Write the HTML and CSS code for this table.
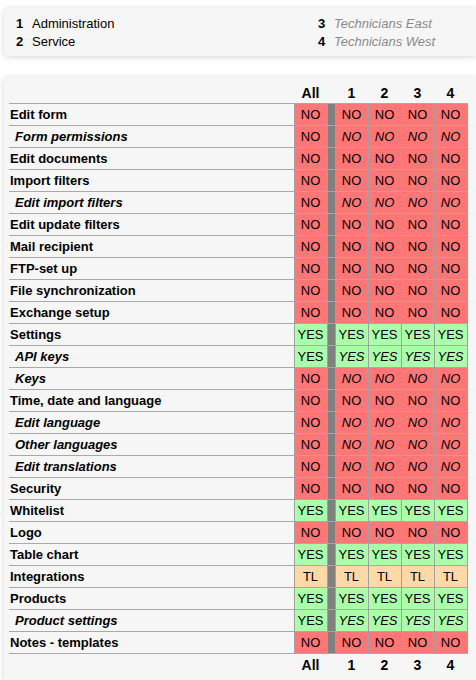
FILE: index.html
```html
<!DOCTYPE html>
<html>
<head>
<meta charset="utf-8">
<link rel="stylesheet" href="styles.css">
</head>
<body>
<div class="card legend">
  <div class="legend-col">
    <div class="legend-item"><span class="num">1</span><span class="name">Administration</span></div>
    <div class="legend-item"><span class="num">2</span><span class="name">Service</span></div>
  </div>
  <div class="legend-col legend-col-last">
    <div class="legend-item"><span class="num">3</span><span class="name muted">Technicians East</span></div>
    <div class="legend-item"><span class="num">4</span><span class="name muted">Technicians West</span></div>
  </div>
</div>

<div class="card matrix">
<table class="perm">
  <colgroup>
    <col class="c-label"><col class="c-val"><col class="c-sep"><col class="c-val"><col class="c-val"><col class="c-val"><col class="c-val">
  </colgroup>
  <thead>
    <tr><th class="lbl"></th><th>All</th><th class="sep"></th><th>1</th><th>2</th><th>3</th><th>4</th></tr>
  </thead>
  <tbody>
    <tr><td class="lbl">Edit form</td><td class="v no">NO</td><td class="sep"></td><td class="v no">NO</td><td class="v no">NO</td><td class="v no">NO</td><td class="v no">NO</td></tr>
    <tr class="sub"><td class="lbl">Form permissions</td><td class="v no">NO</td><td class="sep"></td><td class="v no">NO</td><td class="v no">NO</td><td class="v no">NO</td><td class="v no">NO</td></tr>
    <tr><td class="lbl">Edit documents</td><td class="v no">NO</td><td class="sep"></td><td class="v no">NO</td><td class="v no">NO</td><td class="v no">NO</td><td class="v no">NO</td></tr>
    <tr><td class="lbl">Import filters</td><td class="v no">NO</td><td class="sep"></td><td class="v no">NO</td><td class="v no">NO</td><td class="v no">NO</td><td class="v no">NO</td></tr>
    <tr class="sub"><td class="lbl">Edit import filters</td><td class="v no">NO</td><td class="sep"></td><td class="v no">NO</td><td class="v no">NO</td><td class="v no">NO</td><td class="v no">NO</td></tr>
    <tr><td class="lbl">Edit update filters</td><td class="v no">NO</td><td class="sep"></td><td class="v no">NO</td><td class="v no">NO</td><td class="v no">NO</td><td class="v no">NO</td></tr>
    <tr><td class="lbl">Mail recipient</td><td class="v no">NO</td><td class="sep"></td><td class="v no">NO</td><td class="v no">NO</td><td class="v no">NO</td><td class="v no">NO</td></tr>
    <tr><td class="lbl">FTP-set up</td><td class="v no">NO</td><td class="sep"></td><td class="v no">NO</td><td class="v no">NO</td><td class="v no">NO</td><td class="v no">NO</td></tr>
    <tr><td class="lbl">File synchronization</td><td class="v no">NO</td><td class="sep"></td><td class="v no">NO</td><td class="v no">NO</td><td class="v no">NO</td><td class="v no">NO</td></tr>
    <tr><td class="lbl">Exchange setup</td><td class="v no">NO</td><td class="sep"></td><td class="v no">NO</td><td class="v no">NO</td><td class="v no">NO</td><td class="v no">NO</td></tr>
    <tr><td class="lbl">Settings</td><td class="v yes">YES</td><td class="sep"></td><td class="v yes">YES</td><td class="v yes">YES</td><td class="v yes">YES</td><td class="v yes">YES</td></tr>
    <tr class="sub"><td class="lbl">API keys</td><td class="v yes">YES</td><td class="sep"></td><td class="v yes">YES</td><td class="v yes">YES</td><td class="v yes">YES</td><td class="v yes">YES</td></tr>
    <tr class="sub"><td class="lbl">Keys</td><td class="v no">NO</td><td class="sep"></td><td class="v no">NO</td><td class="v no">NO</td><td class="v no">NO</td><td class="v no">NO</td></tr>
    <tr><td class="lbl">Time, date and language</td><td class="v no">NO</td><td class="sep"></td><td class="v no">NO</td><td class="v no">NO</td><td class="v no">NO</td><td class="v no">NO</td></tr>
    <tr class="sub"><td class="lbl">Edit language</td><td class="v no">NO</td><td class="sep"></td><td class="v no">NO</td><td class="v no">NO</td><td class="v no">NO</td><td class="v no">NO</td></tr>
    <tr class="sub"><td class="lbl">Other languages</td><td class="v no">NO</td><td class="sep"></td><td class="v no">NO</td><td class="v no">NO</td><td class="v no">NO</td><td class="v no">NO</td></tr>
    <tr class="sub"><td class="lbl">Edit translations</td><td class="v no">NO</td><td class="sep"></td><td class="v no">NO</td><td class="v no">NO</td><td class="v no">NO</td><td class="v no">NO</td></tr>
    <tr><td class="lbl">Security</td><td class="v no">NO</td><td class="sep"></td><td class="v no">NO</td><td class="v no">NO</td><td class="v no">NO</td><td class="v no">NO</td></tr>
    <tr><td class="lbl">Whitelist</td><td class="v yes">YES</td><td class="sep"></td><td class="v yes">YES</td><td class="v yes">YES</td><td class="v yes">YES</td><td class="v yes">YES</td></tr>
    <tr><td class="lbl">Logo</td><td class="v no">NO</td><td class="sep"></td><td class="v no">NO</td><td class="v no">NO</td><td class="v no">NO</td><td class="v no">NO</td></tr>
    <tr><td class="lbl">Table chart</td><td class="v yes">YES</td><td class="sep"></td><td class="v yes">YES</td><td class="v yes">YES</td><td class="v yes">YES</td><td class="v yes">YES</td></tr>
    <tr><td class="lbl">Integrations</td><td class="v tl">TL</td><td class="sep"></td><td class="v tl">TL</td><td class="v tl">TL</td><td class="v tl">TL</td><td class="v tl">TL</td></tr>
    <tr><td class="lbl">Products</td><td class="v yes">YES</td><td class="sep"></td><td class="v yes">YES</td><td class="v yes">YES</td><td class="v yes">YES</td><td class="v yes">YES</td></tr>
    <tr class="sub"><td class="lbl">Product settings</td><td class="v yes">YES</td><td class="sep"></td><td class="v yes">YES</td><td class="v yes">YES</td><td class="v yes">YES</td><td class="v yes">YES</td></tr>
    <tr><td class="lbl">Notes - templates</td><td class="v no">NO</td><td class="sep"></td><td class="v no">NO</td><td class="v no">NO</td><td class="v no">NO</td><td class="v no">NO</td></tr>
  </tbody>
  <tfoot>
    <tr><th class="lbl"></th><th>All</th><th class="sep"></th><th>1</th><th>2</th><th>3</th><th>4</th></tr>
  </tfoot>
</table>
</div>
</body>
</html>
```
FILE: styles.css
```css
html, body {
  margin: 0;
  padding: 0;
  background: #ffffff;
  overflow: hidden;
}
body {
  font-family: "Liberation Sans", Arial, sans-serif;
  font-size: 13px;
  color: #000;
  padding-top: 8px;
}
.card {
  background: #f6f6f6;
  margin-left: 4px;
  border-radius: 4px 0 0 4px;
  box-shadow: 0 1px 6px rgba(0, 0, 0, 0.16);
}
.legend {
  display: flex;
  padding: 7px 0 5px 12px;
  line-height: 18px;
}
.legend-col {
  width: 302px;
  flex-shrink: 0;
}
.legend-col-last {
  width: auto;
  flex: 1;
  min-width: 0;
}
.legend-item {
  display: flex;
}
.num {
  font-weight: bold;
  width: 16px;
}
.muted {
  color: #8a8a8a;
  font-style: italic;
}
.matrix {
  margin-top: 21px;
  padding: 5px 0 8px 5px;
}
.perm {
  border-collapse: collapse;
  table-layout: fixed;
  width: 458px;
}
.c-label { width: 285px; }
.c-val { width: 33px; }
.c-sep { width: 8px; }
.perm th {
  font-weight: bold;
  font-size: 14px;
  height: 21px;
  padding: 0;
  text-align: center;
}
.perm thead tr,
.perm tbody tr {
  border-bottom: 1px solid #a9a9a9;
}
.perm td {
  height: 21px;
  padding: 0;
  line-height: 21px;
  white-space: nowrap;
}
.perm td.lbl {
  font-weight: bold;
  padding-left: 1px;
}
.perm tr.sub td.lbl {
  font-style: italic;
  padding-left: 6px;
}
.perm td.v {
  text-align: center;
  border-left: 1px solid #a0a0a0;
  border-right: 1px solid #a0a0a0;
}
.perm tr.sub td.v + td.sep ~ td.v {
  font-style: italic;
}
.perm .sep {
  background: #808080;
  border: none;
}
.perm thead .sep,
.perm tfoot .sep {
  background: transparent;
}
.no { background: #ff7676; }
.yes { background: #aaffaa; }
.tl { background: #ffd8a8; }
```
